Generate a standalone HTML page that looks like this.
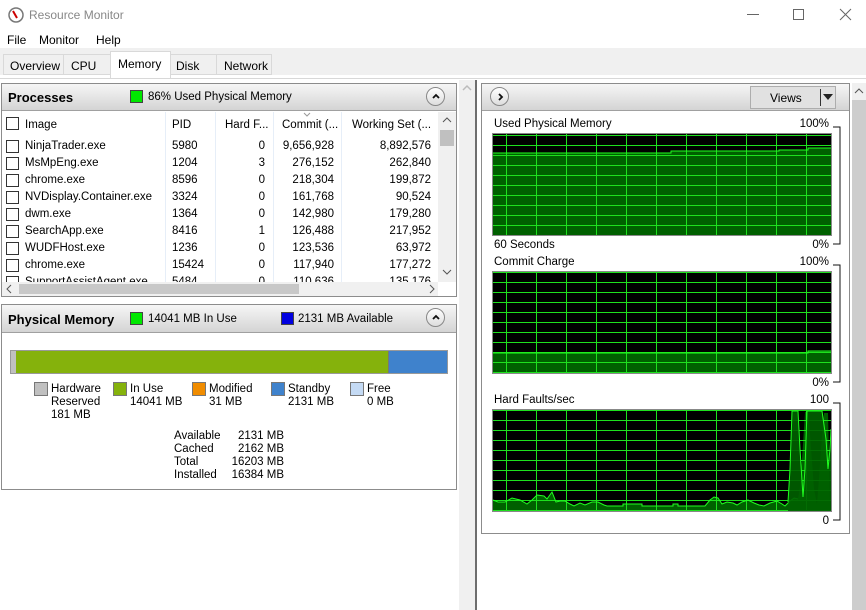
<!DOCTYPE html>
<html><head><meta charset="utf-8"><style>
*{margin:0;padding:0;box-sizing:border-box}
body{width:866px;height:610px;position:relative;overflow:hidden;background:#fff;font-family:"Liberation Sans",sans-serif;font-size:11.5px;color:#000}
.a{position:absolute;white-space:nowrap}
.hdr{position:absolute;background:linear-gradient(#f6f6f6,#d4d4d4);border-bottom:1px solid #a0a0a0}
.panel{position:absolute;border:1px solid #8c8c8c;background:#fff}
.circ{position:absolute;width:19px;height:19px;border-radius:50%;border:1px solid #888;background:linear-gradient(#fff,#ddd)}
.circ svg{position:absolute;left:4px;top:4px}
.cb{position:absolute;width:13px;height:13px;border:1px solid #333;background:#fff}
.r{text-align:right}
.sq{position:absolute;width:14px;height:14px;border:1px solid #777}
</style></head><body>
<svg class="a" style="left:8px;top:7px" width="16" height="16"><circle cx="8" cy="8" r="7" fill="#fff" stroke="#777" stroke-width="1.5"/><line x1="5" y1="4" x2="9" y2="11" stroke="#c00" stroke-width="2"/></svg>
<div class="a" style="left:29px;top:8px;font-size:12px;color:#888">Resource Monitor</div>
<div class="a" style="left:747px;top:14px;width:12px;height:1px;background:#666"></div>
<div class="a" style="left:793px;top:9px;width:11px;height:11px;border:1px solid #666"></div>
<svg class="a" style="left:839px;top:8px" width="13" height="13"><path d="M1 1L12 12M12 1L1 12" stroke="#666"/></svg>
<div class="a" style="left:7px;top:33px;font-size:12px">File</div>
<div class="a" style="left:39px;top:33px;font-size:12px">Monitor</div>
<div class="a" style="left:96px;top:33px;font-size:12px">Help</div>
<div class="a" style="left:0;top:48px;width:866px;height:27px;background:#f0f0f0"></div>
<div class="a" style="left:0;top:75px;width:866px;height:4px;background:#fff;border-bottom:1px solid #d8d8d8"></div>
<div class="a" style="left:3px;top:54px;width:61px;height:21px;border:1px solid #d9d9d9;background:#f0f0f0;padding:4px 0 0 6px;font-size:12px">Overview</div>
<div class="a" style="left:63px;top:54px;width:48px;height:21px;border:1px solid #d9d9d9;background:#f0f0f0;padding:4px 0 0 7px;font-size:12px">CPU</div>
<div class="a" style="left:110px;top:51px;width:61px;height:27px;border:1px solid #d9d9d9;border-bottom:none;background:#fff;padding:5px 0 0 7px;font-size:12px">Memory</div>
<div class="a" style="left:170px;top:54px;width:47px;height:21px;border:1px solid #d9d9d9;background:#f0f0f0;padding:4px 0 0 5px;font-size:12px">Disk</div>
<div class="a" style="left:216px;top:54px;width:56px;height:21px;border:1px solid #d9d9d9;background:#f0f0f0;padding:4px 0 0 7px;font-size:12px">Network</div>
<div class="a" style="left:459px;top:80px;width:16px;height:530px;background:#f0f0f0"></div>
<svg class="a" style="left:462px;top:84px" width="10" height="8"><path d="M1 6L5 2L9 6" stroke="#bbb" fill="none" stroke-width="1.5"/></svg>
<div class="a" style="left:475px;top:80px;width:2px;height:530px;background:#6e6e6e"></div>

<div class="panel" style="left:1px;top:83px;width:456px;height:214px"></div>
<div class="hdr" style="left:2px;top:84px;width:454px;height:27px"></div>
<div class="a" style="left:8px;top:90px;font-size:13px;font-weight:bold">Processes</div>
<div class="a" style="left:130px;top:90px;width:13px;height:13px;background:#00e800;border:1px solid #444"></div>
<div class="a" style="left:148px;top:91px">86% Used Physical Memory</div>
<div class="circ" style="left:426px;top:87px"><svg width="10" height="10"><path d="M2 6L5 3L8 6" stroke="#111" stroke-width="1.8" fill="none"/></svg></div>
<div class="cb" style="left:6px;top:117px"></div>
<div class="a" style="left:25px;top:119px">Image</div>
<div class="a" style="left:172px;top:119px">PID</div>
<div class="a" style="left:225px;top:119px">Hard F...</div>
<div class="a" style="left:282px;top:119px">Commit (...</div>
<div class="a" style="left:352px;top:119px">Working Set (...</div>
<svg class="a" style="left:303px;top:112px" width="8" height="5"><path d="M1 1L4 4L7 1" stroke="#999" fill="none"/></svg>
<div class="a" style="left:165px;top:112px;width:1px;height:170px;background:#e6eef8"></div>
<div class="a" style="left:215px;top:112px;width:1px;height:170px;background:#e6eef8"></div>
<div class="a" style="left:273px;top:112px;width:1px;height:170px;background:#e6eef8"></div>
<div class="a" style="left:341px;top:112px;width:1px;height:170px;background:#e6eef8"></div>
<div class="a" style="left:0;top:136px;width:436px;height:146px;overflow:hidden;line-height:17px">
<table style="border-collapse:collapse;font-size:11.5px;margin-top:2px" cellpadding="0">
<tr><td style="width:25px"><div class="cb" style="position:relative;left:6px;top:0px"></div></td><td style="width:147px">NinjaTrader.exe</td><td style="width:60px">5980</td><td class="r" style="width:33px">0</td><td class="r" style="width:69px">9,656,928</td><td class="r" style="width:97px">8,892,576</td></tr>
<tr><td><div class="cb" style="position:relative;left:6px;top:0px"></div></td><td>MsMpEng.exe</td><td>1204</td><td class="r">3</td><td class="r">276,152</td><td class="r">262,840</td></tr>
<tr><td><div class="cb" style="position:relative;left:6px;top:0px"></div></td><td>chrome.exe</td><td>8596</td><td class="r">0</td><td class="r">218,304</td><td class="r">199,872</td></tr>
<tr><td><div class="cb" style="position:relative;left:6px;top:0px"></div></td><td>NVDisplay.Container.exe</td><td>3324</td><td class="r">0</td><td class="r">161,768</td><td class="r">90,524</td></tr>
<tr><td><div class="cb" style="position:relative;left:6px;top:0px"></div></td><td>dwm.exe</td><td>1364</td><td class="r">0</td><td class="r">142,980</td><td class="r">179,280</td></tr>
<tr><td><div class="cb" style="position:relative;left:6px;top:0px"></div></td><td>SearchApp.exe</td><td>8416</td><td class="r">1</td><td class="r">126,488</td><td class="r">217,952</td></tr>
<tr><td><div class="cb" style="position:relative;left:6px;top:0px"></div></td><td>WUDFHost.exe</td><td>1236</td><td class="r">0</td><td class="r">123,536</td><td class="r">63,972</td></tr>
<tr><td><div class="cb" style="position:relative;left:6px;top:0px"></div></td><td>chrome.exe</td><td>15424</td><td class="r">0</td><td class="r">117,940</td><td class="r">177,272</td></tr>
<tr><td><div class="cb" style="position:relative;left:6px;top:0px"></div></td><td>SupportAssistAgent.exe</td><td>5484</td><td class="r">0</td><td class="r">110,636</td><td class="r">135,176</td></tr>
</table></div>
<div class="a" style="left:438px;top:112px;width:18px;height:170px;background:#f0f0f0"></div>
<div class="a" style="left:440px;top:130px;width:14px;height:16px;background:#c0c0c0"></div>
<svg class="a" style="left:442px;top:116px" width="10" height="8"><path d="M1 6L5 2L9 6" stroke="#555" fill="none"/></svg>
<svg class="a" style="left:442px;top:268px" width="10" height="8"><path d="M1 2L5 6L9 2" stroke="#555" fill="none"/></svg>
<div class="a" style="left:2px;top:282px;width:436px;height:14px;background:#f0f0f0"></div>
<div class="a" style="left:19px;top:284px;width:280px;height:10px;background:#c8c8c8"></div>
<svg class="a" style="left:5px;top:284px" width="8" height="10"><path d="M6 1L2 5L6 9" stroke="#555" fill="none"/></svg>
<svg class="a" style="left:428px;top:284px" width="8" height="10"><path d="M2 1L6 5L2 9" stroke="#555" fill="none"/></svg>

<div class="panel" style="left:1px;top:304px;width:456px;height:186px"></div>
<div class="hdr" style="left:2px;top:305px;width:454px;height:28px"></div>
<div class="a" style="left:8px;top:312px;font-size:13px;font-weight:bold">Physical Memory</div>
<div class="a" style="left:130px;top:312px;width:13px;height:13px;background:#00e800;border:1px solid #444"></div>
<div class="a" style="left:148px;top:313px">14041 MB In Use</div>
<div class="a" style="left:281px;top:312px;width:13px;height:13px;background:#0000e0;border:1px solid #444"></div>
<div class="a" style="left:298px;top:313px">2131 MB Available</div>
<div class="circ" style="left:426px;top:308px"><svg width="10" height="10"><path d="M2 6L5 3L8 6" stroke="#111" stroke-width="1.8" fill="none"/></svg></div>
<div class="a" style="left:10px;top:350px;width:438px;height:24px;border:1px solid #999;background:#3f82cc"></div>
<div class="a" style="left:11px;top:351px;width:5px;height:22px;background:#c0c0c0"></div>
<div class="a" style="left:16px;top:351px;width:372px;height:22px;background:#85b20c"></div>
<div class="a" style="left:388px;top:351px;width:1px;height:22px;background:#777"></div>
<div class="sq" style="left:34px;top:382px;background:#c0c0c0"></div>
<div class="sq" style="left:113px;top:382px;background:#85b20c"></div>
<div class="sq" style="left:192px;top:382px;background:#f08c00"></div>
<div class="sq" style="left:271px;top:382px;background:#3f82cc"></div>
<div class="sq" style="left:350px;top:382px;background:#c4daf4"></div>
<div class="a" style="left:51px;top:383px;line-height:13px">Hardware<br>Reserved<br>181 MB</div>
<div class="a" style="left:130px;top:383px;line-height:13px">In Use<br>14041 MB</div>
<div class="a" style="left:209px;top:383px;line-height:13px">Modified<br>31 MB</div>
<div class="a" style="left:288px;top:383px;line-height:13px">Standby<br>2131 MB</div>
<div class="a" style="left:367px;top:383px;line-height:13px">Free<br>0 MB</div>
<div class="a" style="left:174px;top:430px;line-height:13px">Available<br>Cached<br>Total<br>Installed</div>
<div class="a r" style="left:220px;top:430px;width:64px;line-height:13px">2131 MB<br>2162 MB<br>16203 MB<br>16384 MB</div>

<div class="panel" style="left:481px;top:83px;width:369px;height:451px"></div>
<div class="hdr" style="left:482px;top:84px;width:367px;height:27px"></div>
<div class="circ" style="left:490px;top:87px"><svg width="10" height="10"><path d="M4 2L7 5L4 8" stroke="#111" stroke-width="1.8" fill="none"/></svg></div>
<div class="a" style="left:750px;top:86px;width:86px;height:23px;background:#e1e1e1;border:1px solid #adadad"></div>
<div class="a" style="left:770px;top:91px;font-size:12px">Views</div>
<div class="a" style="left:820px;top:89px;width:1px;height:17px;background:#333"></div>
<svg class="a" style="left:823px;top:94px" width="10" height="6"><path d="M0 0H10L5 6Z" fill="#222"/></svg>
<div class="a" style="left:852px;top:83px;width:14px;height:527px;background:#cdcdcd"></div>
<div class="a" style="left:852px;top:83px;width:14px;height:17px;background:#f0f0f0"></div>
<svg class="a" style="left:854px;top:87px" width="10" height="8"><path d="M1 6L5 2L9 6" stroke="#555" fill="none"/></svg>

<div class="a" style="left:494px;top:118px">Used Physical Memory</div>
<div class="a r" style="left:780px;top:118px;width:49px">100%</div>
<div class="a" style="left:494px;top:239px">60 Seconds</div>
<div class="a r" style="left:780px;top:239px;width:49px">0%</div>
<div class="a" style="left:494px;top:256px">Commit Charge</div>
<div class="a r" style="left:780px;top:256px;width:49px">100%</div>
<div class="a r" style="left:780px;top:377px;width:49px">0%</div>
<div class="a" style="left:494px;top:394px">Hard Faults/sec</div>
<div class="a r" style="left:780px;top:394px;width:49px">100</div>
<div class="a r" style="left:780px;top:515px;width:49px">0</div>
<svg class="a" style="left:833px;top:120px" width="10" height="410"><path d="M0 7H7V124H0M0 145H7V262H0M0 283H7V400H0" stroke="#111" fill="none"/></svg>

<svg class="a" style="left:492px;top:133px" width="340" height="103">
<defs><pattern id="g" x="0" y="0" width="30" height="10" patternUnits="userSpaceOnUse"><rect x="14" y="0" width="1" height="10" fill="#1ee01e"/><rect x="0" y="1" width="30" height="1" fill="#1ee01e"/></pattern></defs>
<rect width="340" height="103" fill="#000"/>
<path d="M1 20H179V18H287V17H316V15H339V102H1Z" fill="#006000"/>
<rect x="0" y="0" width="340" height="103" fill="url(#g)" transform="translate(0,1)"/>
<path d="M1 20H179V18H287V17H316V15H339" stroke="#20ff20" fill="none"/>
<rect x="0.5" y="0.5" width="339" height="102" fill="none" stroke="#888"/>
</svg>
<svg class="a" style="left:492px;top:271px" width="340" height="103">
<rect width="340" height="103" fill="#000"/>
<path d="M1 82H316V80H339V102H1Z" fill="#006000"/>
<rect x="0" y="1" width="340" height="103" fill="url(#g)"/>
<path d="M1 82H316V80H339" stroke="#20ff20" fill="none"/>
<rect x="0.5" y="0.5" width="339" height="102" fill="none" stroke="#888"/>
</svg>
<svg class="a" style="left:492px;top:409px" width="340" height="103">
<rect width="340" height="103" fill="#000"/>
<path d="M1 91L6 93L13 93L20 89L28 91L35 95L40 91L45 86L52 87L55 90L60 83L64 93L68 92L73 92L78 95L82 97L88 94L93 96L100 93L106 93L112 96L115 97L131 97L131 95L150 95L150 97L181 97L181 95L186 95L186 97L213 97L218 91L222 88L226 89L230 95L235 93L241 94L245 96L250 93L256 91L262 94L267 96L272 97L278 94L285 92L290 95L293 97L298 92L302 89L306 90L308 78L310 50L312 20L313 3L316 2L318 25L322 80L325 95L327 70L329 40L332 4L336 4L338 95L338 102L1 102Z" fill="#006000"/>
<rect x="0" y="1" width="340" height="103" fill="url(#g)"/>
<path d="M1 91L6 93L13 93L20 89L28 91L35 95L40 91L45 86L52 87L55 90L60 83L64 93L68 92L73 92L78 95L82 97L88 94L93 96L100 93L106 93L112 96L115 97L131 97L131 95L150 95L150 97L181 97L181 95L186 95L186 97L213 97L218 91L222 88L226 89L230 95L235 93L241 94L245 96L250 93L256 91L262 94L267 96L272 97L278 94L285 92L290 95L293 97L298 92L302 89L306 90" stroke="#20ff20" fill="none"/>
<path d="M296 102L298 60L300 2L306 2L308 40L311 88L313 60L315 2L330 2L334 30L336 60L338 40L339 20V102Z" fill="#006000" opacity="0.9"/>
<path d="M296 93L298 60L300 2L306 2L308 40L311 88L313 60L315 2L330 2L334 30L336 60L338 40L339 20" stroke="#20ff20" fill="none"/>
<rect x="0.5" y="0.5" width="339" height="102" fill="none" stroke="#888"/>
</svg>
</body></html>
